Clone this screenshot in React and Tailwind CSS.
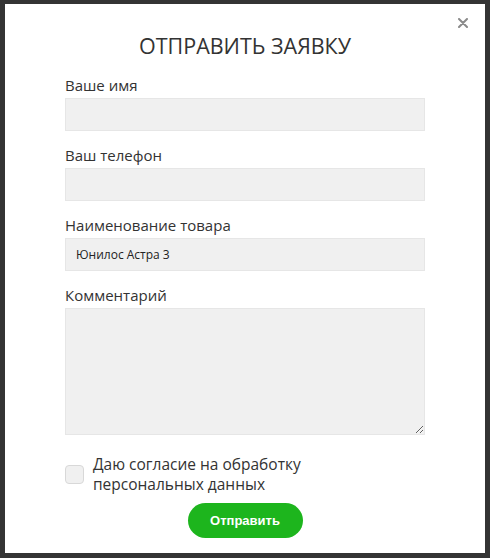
import { useState } from "react";

const fieldClass =
  "block w-full h-[33px] bg-[#f0f0f0] border border-[#e6e6e6] px-[10px] text-[12px] text-[#222] outline-none";

const Field = ({ label, defaultValue }) => (
  <div className="mb-[14px]">
    <label className="block text-[15px] leading-[20px] text-[#333] mb-[3px]">{label}</label>
    <input type="text" className={fieldClass} defaultValue={defaultValue} />
  </div>
);

export default function App() {
  const [agree, setAgree] = useState(false);

  return (
    <div
      className="w-[490px] h-[558px] bg-[#343434] pt-[4px] pl-[5px]"
      style={{ fontFamily: '"Open Sans", "Noto Sans", sans-serif' }}
    >
      <div className="relative w-[480px] h-[549px] bg-white px-[60px] pt-[26px]">
        {/* close */}
        <button className="absolute top-[11px] right-[14px] w-[16px] h-[16px] flex items-center justify-center text-[#8a8a8a]">
          <svg width="10" height="10" viewBox="0 0 10 10">
            <path d="M1 1L9 9M9 1L1 9" stroke="currentColor" strokeWidth="2" strokeLinecap="round" />
          </svg>
        </button>

        <h2 className="text-center text-[21.5px] leading-[32px] text-[#333] mb-[13px]">
          ОТПРАВИТЬ ЗАЯВКУ
        </h2>

        <Field label="Ваше имя" />
        <Field label="Ваш телефон" />
        <Field label="Наименование товара" defaultValue="Юнилос Астра 3" />

        <div>
          <label className="block text-[15px] leading-[20px] text-[#333] mb-[3px]">Комментарий</label>
          <textarea className="block w-full h-[127px] bg-[#f0f0f0] border border-[#e6e6e6] px-[10px] py-[6px] text-[12px] outline-none" />
        </div>

        <label className="mt-[19px] flex items-center gap-[9px] cursor-pointer">
          <span
            onClick={() => setAgree(!agree)}
            className="w-[19px] h-[19px] shrink-0 rounded-[4px] border border-[#d8d8d8] bg-[#f0f0f0] flex items-center justify-center text-[12px] text-[#1db51d]"
          >
            {agree ? "✓" : ""}
          </span>
          <span className="text-[15.5px] leading-[20px] text-[#333]">
            Даю согласие на обработку
            <br />
            персональных данных
          </span>
        </label>

        <div className="mt-[9px] flex justify-center">
          <button
            className="w-[115px] h-[35px] rounded-full bg-[#1db51d] text-white text-[13px] font-bold"
            style={{ fontFamily: '"Liberation Sans", Arial, sans-serif' }}
          >
            Отправить
          </button>
        </div>
      </div>
    </div>
  );
}
